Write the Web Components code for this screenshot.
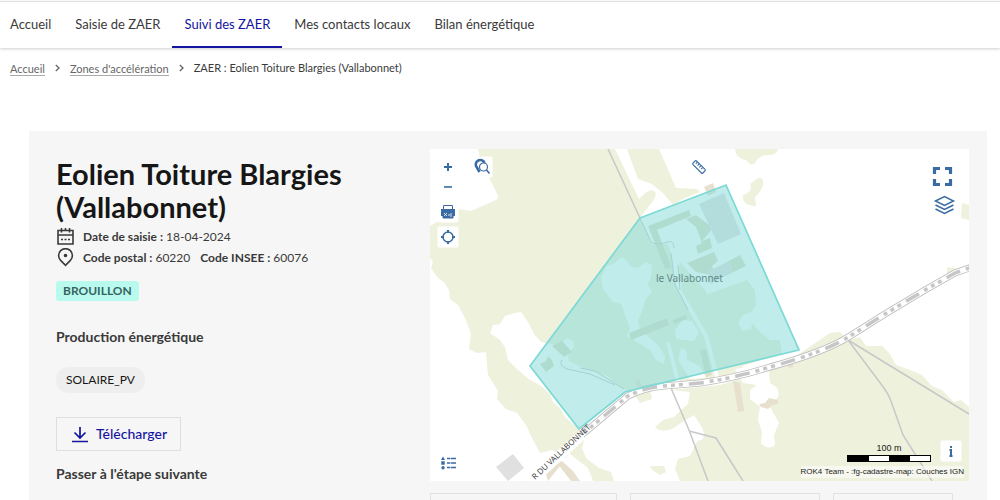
<!DOCTYPE html>
<html lang="fr">
<head>
<meta charset="utf-8">
<title>ZAER : Eolien Toiture Blargies (Vallabonnet)</title>
<style>
body { margin: 0; background: #fff; color: #3a3a3a; font-family: "Lato", "Open Sans", sans-serif; }
</style>
</head>
<body>
<zaer-page></zaer-page>

<template id="t-page">
<style>
:host { display: block; height: 100vh; overflow: hidden; }
main { margin: 55px 13px 0 29px; }
</style>
<zaer-nav>
  <zaer-nav-item>Accueil</zaer-nav-item>
  <zaer-nav-item>Saisie de ZAER</zaer-nav-item>
  <zaer-nav-item current>Suivi des ZAER</zaer-nav-item>
  <zaer-nav-item>Mes contacts locaux</zaer-nav-item>
  <zaer-nav-item>Bilan énergétique</zaer-nav-item>
</zaer-nav>
<zaer-breadcrumb></zaer-breadcrumb>
<main>
  <zaer-panel>
    <zaer-summary slot="summary"></zaer-summary>
    <zaer-map slot="map"></zaer-map>
  </zaer-panel>
</main>
</template>

<template id="t-nav">
<style>
:host { display: block; border-top: 1px solid #e2e2e2; margin-top: 1px; box-shadow: 0 1px 3px #0003; }
nav { display: flex; height: 46px; padding-right: 12px; }
</style>
<nav aria-label="Menu principal"><slot></slot></nav>
</template>

<template id="t-nav-item">
<style>
:host { display: flex; }
:host(:first-child) { margin-left: -2px; }
a { display: flex; align-items: center; padding: 0 12px; font-size: 13px; line-height: 20px; color: #3a3a3a; text-decoration: none; border-bottom: 2px solid transparent; white-space: nowrap; }
:host([current]) a { color: #1414a0; border-bottom-color: #1414a0; }
</style>
<a href="#"><slot></slot></a>
</template>

<template id="t-breadcrumb">
<style>
:host { display: block; padding: 12px 10px 0; font-size: 11px; line-height: 16px; color: #3a3a3a; }
ol { display: flex; align-items: center; margin: 0; padding: 0; list-style: none; }
li { display: flex; align-items: center; }
a { color: #666; text-decoration: none; box-shadow: 0 1px 0 #aaa; line-height: 13px; }
svg { width: 5px; height: 8px; margin: 0 10px; fill: none; stroke: #666; stroke-width: 1.3; }
</style>
<nav aria-label="Fil d'Ariane"><ol>
  <li><a href="#">Accueil</a><svg viewBox="0 0 5 8"><path d="M.8 1 4 4 .8 7"/></svg></li>
  <li><a href="#">Zones d'accélération</a><svg viewBox="0 0 5 8"><path d="M.8 1 4 4 .8 7"/></svg></li>
  <li>ZAER : Eolien Toiture Blargies (Vallabonnet)</li>
</ol></nav>
</template>

<template id="t-panel">
<style>
:host { display: grid; grid-template-columns: 374fr 539fr; background: #f6f6f6; padding: 18px 18px 32px 27px; align-items: start; }
.row { display: grid; grid-template-columns: 187fr 190fr 120fr; gap: 13px; margin: 12px 16px 0 0; }
.row div { height: 34px; border: 1px solid #e2e2e2; }
</style>
<slot name="summary"></slot>
<div><slot name="map"></slot><div class="row"><div></div><div></div><div></div></div></div>
</template>

<template id="t-summary">
<style>
:host { display: block; padding-top: 8px; }
h1 { margin: 0 0 3px; max-width: 320px; font-size: 29px; line-height: 33px; color: #161616; font-weight: 700; }
.meta { display: flex; align-items: center; gap: 8px; margin: 0; font-size: 12px; line-height: 21px; }
.meta svg { width: 19px; height: 19px; fill: none; stroke: #3a3a3a; stroke-width: 1.6; }
.meta span + span { margin-left: 2px; }
.badge { display: inline-block; margin: 13px 0 0; padding: 0 7px; border-radius: 3px; background: #b8fbee; color: #37635f; font-size: 12px; line-height: 20px; font-weight: 700; }
h2 { margin: 0; font-size: 14px; line-height: 20px; color: #3a3a3a; font-weight: 700; }
.prod { margin-top: 26px; }
.tag { display: inline-block; margin: 20px 0 0; padding: 0 10px; border-radius: 13px; background: #eee; color: #161616; font-size: 12px; line-height: 26px; }
button { display: flex; align-items: center; gap: 8px; height: 34px; margin: 24px 0 13px; padding: 0 13px 0 15px; border: 1px solid #dfdfdf; background: none; color: #1414a0; font: 500 14px/20px "Lato", sans-serif; }
button svg { width: 16px; height: 17px; fill: none; stroke: #1414a0; stroke-width: 1.7; }
</style>
<h1>Eolien Toiture Blargies (Vallabonnet)</h1>
<p class="meta"><svg viewBox="0 0 19 19"><path d="M2 3.500h15v13.500H2zM2 8h15M5.500 1v4.500M13.500 1v4.500M9.500 1v3"/><path d="M5 12.500h2M8.500 12.500h2M12 12.500h2"/></svg><span><b>Date de saisie :</b> 18-04-2024</span></p>
<p class="meta"><svg viewBox="0 0 19 19"><path d="M4.600 12.400A6.900 6.900 0 1 1 14.400 12.400L9.500 17.300z"/><circle cx="9.500" cy="7.500" r="1" fill="#3a3a3a"/></svg><span><b>Code postal :</b> 60220</span><span><b>Code INSEE :</b> 60076</span></p>
<div class="badge">BROUILLON</div>
<h2 class="prod">Production énergétique</h2>
<div class="tag">SOLAIRE_PV</div>
<button type="button"><svg viewBox="0 0 16 17"><path d="M8 1v11M2.500 6.500 8 12l5.500-5.500M0 15.500h16"/></svg>Télécharger</button>
<h2>Passer à l'étape suivante</h2>
</template>

<template id="t-map">
<style>
:host { display: block; position: relative; aspect-ratio: 539 / 332; overflow: hidden; background: #fff; }
.ground { display: block; width: 100%; height: 100%; }
.tools { position: absolute; top: 8px; left: 8px; display: grid; justify-items: center; gap: 5px; }
.search { position: absolute; top: 8px; left: 42px; }
.measure { position: absolute; top: 8px; left: 48%; }
.right { position: absolute; top: 16px; right: 13px; display: grid; gap: 4px; }
.legend { position: absolute; left: 8px; bottom: 8px; }
.info { position: absolute; right: 8px; bottom: 20px; }
.scale { position: absolute; right: 38px; bottom: 19px; width: 84px; font: 9px/13px "Liberation Sans", sans-serif; color: #222; text-align: center; }
.bar { display: flex; box-sizing: border-box; height: 7px; border: 1px solid #000; background: #fff; }
.bar i { flex: 1; }
.bar i:nth-child(odd) { background: #000; }
.credit { position: absolute; right: 5px; bottom: 3px; font: 8px/12px "Liberation Sans", sans-serif; color: #222; background: #fff8; white-space: nowrap; }
</style>
<svg class="ground" viewBox="430 149 539 332" preserveAspectRatio="xMidYMid slice">
  <g fill="#eef1dc">
    <path d="M478 149 480 158 498 196Q499 198 496 200L471 211 458 209 430 226V258L433 262 431 268 438 278 444 282 449 290 450 299 458 305 465 318 471 334 469 349 477 353 486 352 487 364 488 375 498 391 497 399 506 409 517 413 526 425 533 440 540 453 552 450 566 458 581 436 578 428 565 417 561 409 553 402 550 394 541 386 530 380 518 370 508 360 505 347 500 340 490 333 493 325 500 324 505 316 515 313 521 312 528 322 534 334 541 342 560 346 566 338 573 341 574 347 568 354 570 367 590 371 608 380 624 392 640 389 700 382 745 372 705 290 687 270 680 262 676 290 672 258 668 244 652 245 640 218 608 149z"/>
    <path d="M608 149H615L639 199 645 193Q652 188 655 192T648 207L640 218z"/>
    <path d="M627 149H659L676 188 697 189 700 192 685 198 673 205 664 194 652 184 638 179z"/>
    <path d="M735 149H778Q777 155 768 155T755 163Q751 167 746 160 735 158 735 149zM758 178Q764 177 763 184T755 197L756 206Q742 206 743 195 754 191 750 184zM962 203 969 205V220L961 218z"/>
    <path d="M690 305 700 297 747 280 755 290 756 305 751 312 743 315 738 323 743 331 751 329 752 323 760 332 770 340 780 340 782 354 717 374z"/>
    <path d="M947 267 960 269 969 265V270L947 279zM635 395 650 390 652 399 640 403zM585 436 577 445 566 450 575 458 588 468 593 481H614L611 472 599 468 586 458 582 448zM650 466 664 466 666 472 660 475 652 470z"/>
    <path d="M671 390 720 385 780 367 830 333 840 332 848 340 860 337 866 346 882 346 890 354 896 365 910 370 922 375 932 386 942 390 954 402 961 400 969 407V481H680L675 469 678 459 690 456 700 436 703 429 694 415 684 421 672 429Q660 433 655 427L663 420 674 417 680 411 688 404 690 392z"/>
  </g>
  <g fill="#fff">
    <path d="M601 277 607 266 615 263 622 257 628 262 630 266 638 268 646 262 652 265 651 277 648 285 652 292 645 300 642 312 638 320 640 330 650 338 658 345 665 356 664 364 656 360 650 350 627 336 630 328 621 304 613 302 603 289z"/>
    <path d="M683 320 692 321 699 333 694 341 676 339 675 330zM681 348 686 350 687 360 700 366 706 378 690 379 678 360zM666 342 670 343 680 381 676 382zM700 428Q707 431 702 440L697 441z"/>
    <path d="M735 369 758 365 768 364 770 383Q781 388 778 397L770 407 779 423 774 435 775 445Q768 451 761 443L762 432 758 420 760 407 750 399 750 390 757 385 743 383z"/>
  </g>
  <g fill="none" stroke="#fff" stroke-width="4"><path d="M676 262 680 292 706 336 717 377M562 360 585 371 605 377 626 393"/></g>
  <g fill="#dfdfc9">
    <path d="M648 226 689 210 691 216 657 230 672 268 665 269zM686 219 696 215 713 228 702 241 710 238 712 248 698 254 696 246 702 243 696 227zM687 263 714 252 718 261 712 266 716 276 696 272zM629 333 667 318 669 325 631 340zM673 320 686 315 687 319 674 324zM540 364 546 361 548 356 552 360 554 366 546 372zM552 346 562 341 572 352 564 357zM700 350 706 349 712 375 706 377zM716 268 740 255 746 266 725 276z"/>
  </g>
  <g fill="#e4e0e2"><path d="M699 204 724 193 741 234 718 244zM708 271 730 262 733 272 710 284z"/></g>
  <g fill="#e8e0cf"><path d="M704 187 713 183 716 192 708 196zM733 381 740 383 744 411 738 412zM759 404 765 403 769 398 778 400 778 404 772 405 768 409 761 407zM635 382 639 379 642 386 637 388zM546 474 558 463 560 466 548 481zM787 365 793 363 793 367 789 368zM557 463 562 461 573 471 580 481H571z"/></g>
  <path d="M496 467 513 454 524 468 508 481z" fill="#e0e0e0"/>
  <g fill="none" stroke="#c9c7c8" stroke-width="1.500">
    <path d="M608 149 640 218M671 388 689 430 708 481M689 431 716 438 743 481M848 340 884 388Q889 395 891 401L903 435 932 481M848 340 969 414"/>
    <path stroke-width="1" d="M640 218 651 242Q654 246 668 242 674 240 674 248M671 253 675 285 688 310M678 265 680 290M562 360Q558 365 567 369L590 374 615 385M580 368 595 371 624 389"/>
  </g>
  <path d="M522 489 584 433 628 396Q646 387 664 386L700 383Q735 378 770 367 825 352 850 336L885 314 925 290 955 273 972 267" fill="none" stroke="#bcbcbc" stroke-width="7"/>
  <path d="M522 489 584 433 628 396Q646 387 664 386L700 383Q735 378 770 367 825 352 850 336L885 314 925 290 955 273 972 267" fill="none" stroke="#fff" stroke-width="5.400"/>
  <path d="M584 433 628 396Q646 387 664 386L700 383Q735 378 770 367 825 352 850 336L885 314 925 290 955 273 972 267" fill="none" stroke="#c6c6c6" stroke-width="3.500" stroke-dasharray="4 4 4 4 4 6 15 6"/>
  <path d="M526 486 582 435" stroke="#fff" stroke-width="10"/>
  <path d="M640 218 726 185 799 350 625 392 579 429 530 366z" fill="#81d9d7" fill-opacity=".5" stroke="#7bd9d6" stroke-width="1.700"/>
  <text x="656" y="282" font-family="Noto Sans, sans-serif" font-size="10" fill="#5f8b8b">le Vallabonnet</text>
  <text transform="translate(535 480) rotate(-43)" font-family="Noto Sans, sans-serif" font-size="8" fill="#444">R DU VALLABONNET</text>
</svg>
<div class="tools">
  <map-tool label="Zoomer"><svg viewBox="0 0 20 20"><path d="M10 6v8M6 10h8" stroke-width="2"/></svg></map-tool>
  <map-tool label="Dézoomer" low><svg viewBox="0 0 20 20"><path d="M6 10h8" stroke-width="1.600"/></svg></map-tool>
  <map-tool label="Imprimer" boxed><svg viewBox="0 0 20 20"><path d="M5.500 7V3.500h9V7" stroke-width="1"/><path d="M3 7h14v7H3z" fill="#3b6ba3" stroke="none"/><path d="M5 10h10v6H5z" fill="#3b6ba3" stroke-width="1"/><path d="m6 11 3 3m-3 0 3-3M10 13h2m1-2v4" stroke="#fff" stroke-width=".8"/></svg></map-tool>
  <map-tool label="Me localiser" boxed><svg viewBox="0 0 20 20"><circle cx="10" cy="10" r="5" stroke-width="1.500"/><path d="M10 3v3M10 14v3M3 10h3M14 10h3" stroke-width="2"/></svg></map-tool>
</div>
<map-tool class="search" label="Rechercher" boxed><svg viewBox="0 0 20 20"><path d="M7.500 15 4 9a4.500 4.500 0 1 1 8.500-3" stroke-width="2.600"/><circle cx="11.500" cy="10" r="4" fill="#fff" stroke-width="1.200"/><path d="m14.500 13 3 3.500" stroke-width="1.600"/></svg></map-tool>
<map-tool class="measure" label="Mesurer"><svg viewBox="0 0 20 20"><g transform="rotate(45 10 10)" stroke-width="1.100"><rect x="3" y="7.500" width="14" height="5" rx="1"/><path d="M5.500 8v2M8 8v2M10.500 8v2M13 8v2"/></g></svg></map-tool>
<div class="right">
  <map-tool label="Plein écran" big><svg viewBox="0 0 24 24"><path d="M9 3.500H3.500V9M14 3.500h5.500V9M9 19.500H3.500V14M14 19.500h5.500V14" stroke-width="3.200"/></svg></map-tool>
  <map-tool label="Couches" big><svg viewBox="0 0 24 24"><path d="M4.500 8 13.500 3.500 22.500 8 13.500 12.500zM4.500 12l9 4.500 9-4.500M4.500 16l9 4.500 9-4.500" stroke-width="1.500"/></svg></map-tool>
</div>
<map-tool class="legend" label="Légende"><svg viewBox="0 0 20 20"><path d="M9 5.500h9M9 10h9M9 14.500h9" stroke-width="1.300" stroke-dasharray="3 .6 6"/><path d="M3 7 5 3.500 7 7zM3.300 8.300h3.400v3.400H3.300zM5 13a1.700 1.700 0 1 1 0 3.400A1.700 1.700 0 0 1 5 13z" fill="#3b6ba3" stroke="none"/></svg></map-tool>
<map-tool class="info" label="Informations" boxed><svg viewBox="0 0 20 20"><path d="M10 5v2M8.500 9H10v6M8.500 15h3" stroke-width="2"/></svg></map-tool>
<div class="scale">100 m<div class="bar"><i></i><i></i><i></i><i></i></div></div>
<div class="credit">ROK4 Team - :fg-cadastre-map: Couches IGN</div>
</template>

<template id="t-tool">
<style>
:host { display: block; width: 20px; height: 20px; }
:host([big]) { width: 26px; height: 24px; }
:host([low]) { margin-top: -5px; }
button { display: block; width: 100%; height: 100%; padding: 0; border: 0; background: none; color: #3b6ba3; }
:host([boxed]) button { background: #fff; border-radius: 2px; box-shadow: 0 0 0 1px #fff8; }
::slotted(svg) { display: block; width: 100%; height: 100%; fill: none; stroke: currentColor; color: #3b6ba3; }
</style>
<button type="button"><slot></slot></button>
</template>

<script>
class TemplateElement extends HTMLElement {
  constructor() {
    super();
    const template = document.getElementById(this.constructor.template);
    this.attachShadow({ mode: "open" }).append(template.content.cloneNode(true));
  }
}
class MapTool extends TemplateElement {
  static template = "t-tool";
  connectedCallback() {
    this.shadowRoot.querySelector("button").setAttribute("aria-label", this.getAttribute("label"));
  }
}
customElements.define("map-tool", MapTool);
customElements.define("zaer-nav-item", class extends TemplateElement { static template = "t-nav-item"; });
customElements.define("zaer-nav", class extends TemplateElement { static template = "t-nav"; });
customElements.define("zaer-breadcrumb", class extends TemplateElement { static template = "t-breadcrumb"; });
customElements.define("zaer-map", class extends TemplateElement { static template = "t-map"; });
customElements.define("zaer-summary", class extends TemplateElement { static template = "t-summary"; });
customElements.define("zaer-panel", class extends TemplateElement { static template = "t-panel"; });
customElements.define("zaer-page", class extends TemplateElement { static template = "t-page"; });
</script>
</body>
</html>
